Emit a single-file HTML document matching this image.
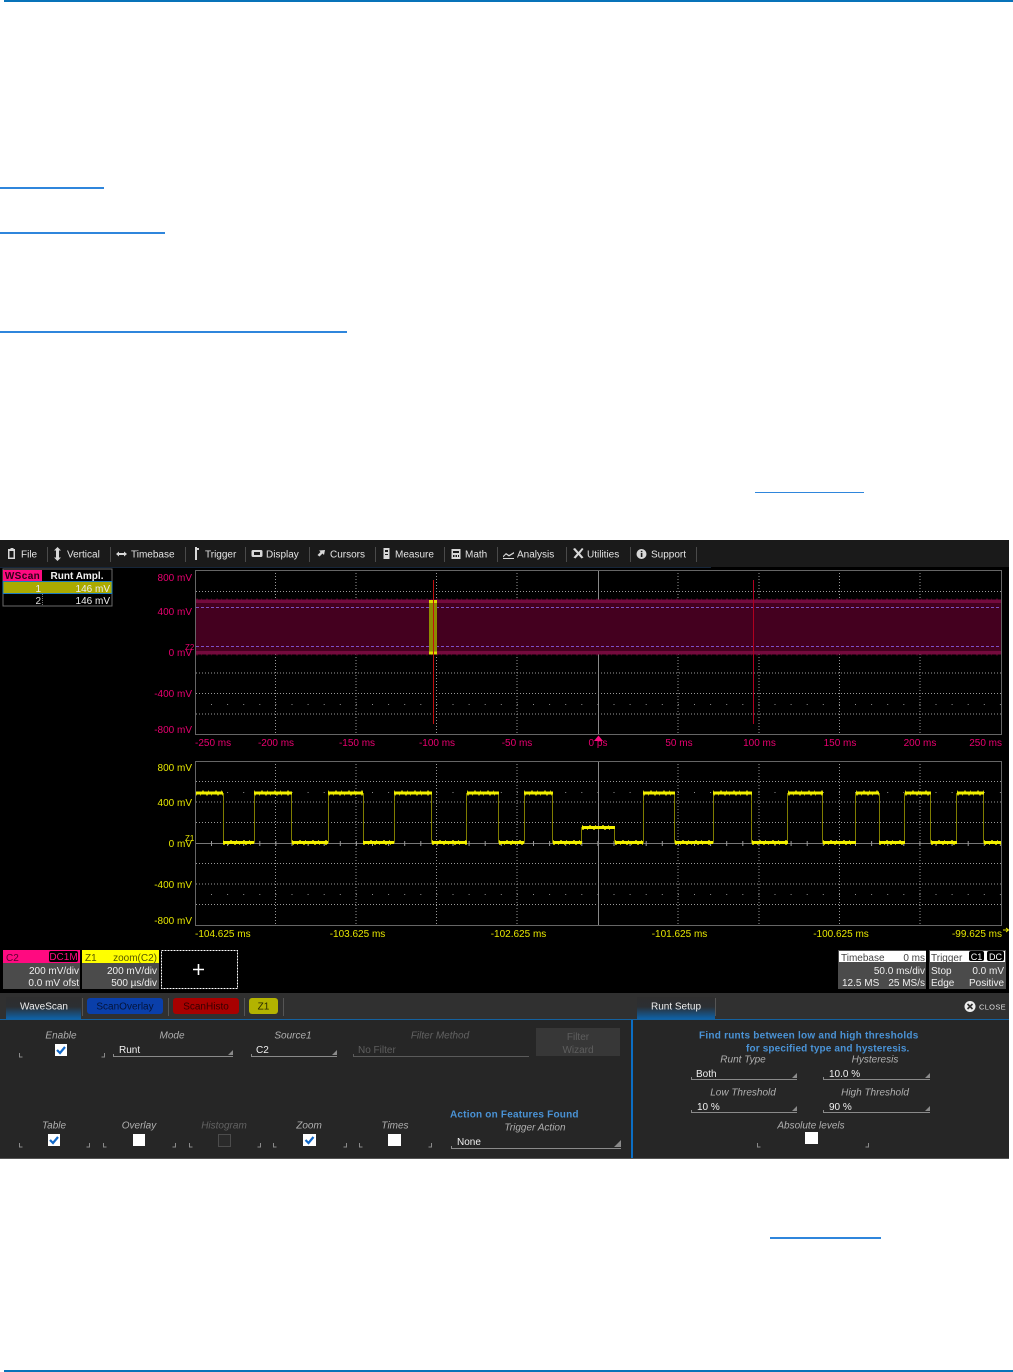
<!DOCTYPE html>
<html lang="en"><head><meta charset="utf-8"><title>WaveScan Runt</title>
<style>
html,body{margin:0;padding:0;background:#fff;width:1013px;height:1372px;overflow:hidden}
svg{display:block}
text{font-family:"Liberation Sans",Arial,sans-serif;font-size:10px}
.scope{filter:blur(.35px)}
.tb{fill:#e4e4e4}
.p{fill:#e8006f}
.y{fill:#e6e600}
.l{fill:#b0b0b0;font-style:italic;text-anchor:middle}
.d{fill:#626262;font-style:italic;text-anchor:middle}
.w{fill:#f0f0f0}
.b{fill:#4a93d6;font-weight:bold}
.r{text-anchor:end}
.m{text-anchor:middle}
.g{stroke:#999;stroke-width:1;stroke-dasharray:1 2;fill:none}
.sep{stroke:#4a4a4a;stroke-width:1}
.k{fill:none;stroke:#8a8a8a;stroke-width:1}
</style></head><body>
<svg width="1013" height="1372" viewBox="0 0 1013 1372" xmlns="http://www.w3.org/2000/svg">
<rect width="1013" height="1372" fill="#fff"/>
<rect x="4" y="0" width="1009" height="2" fill="#0873b9"/>
<rect x="4" y="1370" width="1009" height="2" fill="#0873b9"/>
<rect x="0" y="187" width="104" height="2" fill="#2f86dc"/>
<rect x="0" y="232" width="165" height="2" fill="#2f86dc"/>
<rect x="0" y="331" width="347" height="2" fill="#2f86dc"/>
<rect x="755" y="492" width="109" height="1" fill="#2f86dc"/>
<rect x="770" y="1237" width="111" height="2" fill="#2f86dc"/>

<!-- scope -->
<rect x="0" y="540" width="1009" height="619" fill="#000"/>
<g class="scope">
<rect x="0" y="540" width="1009" height="27" fill="#1a1a1a"/>
<rect x="0" y="567" width="711" height="1" fill="#16263a"/>
<g class="sep"><path d="M47.5 547V562M110.5 547V562M185.5 547V562M245.5 547V562M309.5 547V562M375.5 547V562M444.5 547V562M497.5 547V562M566.5 547V562M630.5 547V562M696.5 547V562"/></g>
<!-- toolbar icons -->
<g fill="#d8d8d8">
<path d="M9 549h1.500v-1h3v1H15v10H8v-10zM9.500 551v6.500h4V551z"/>
<path d="M57.500 547l3.500 3.500h-2v7h2l-3.500 3.500-3.500-3.500h2v-7h-2z"/>
<path d="M116 554l3-2.500v1.500h5v-1.500l3 2.500-3 2.500v-1.500h-5v1.500z"/>
<path d="M195 547h2v1h2v2h-2v10h-2z"/>
<path d="M253 550h8a1.500 1.500 0 0 1 1.500 1.500v4a1.500 1.500 0 0 1-1.500 1.500h-8a1.500 1.500 0 0 1-1.500-1.500v-4a1.500 1.500 0 0 1 1.500-1.500zM254 552v3h6v-3z"/>
<path d="M325 550l-1 5-1.500-1.500-3 3-2-1.500 3-3-1.500-1.500z"/>
<path d="M383.500 548h6v11h-6zM385 550v2h3v-2zM385 554v1h3v-1z"/>
<path d="M451.500 549h9v10h-9zM453 551v2h6v-2zM453 555v2h1.500v-2zM455.500 555v2h1.500v-2zM458 555v2h1v-2z"/>
<path d="M503 558h11v1h-11zM503 556l3-3 3 2 5-3v1.500l-5 3-3-2-3 3z"/>
<path d="M573 549l2-1 3.500 4 3.500-4 1.500 1-3.500 4.500 3.500 4-2 1-3-3.500-3 3.500-2-1 3.500-4z"/>
<circle cx="641.500" cy="554" r="5"/>
</g>
<rect x="640.800" y="553" width="1.600" height="4" fill="#1a1a1a"/><rect x="640.800" y="550.800" width="1.600" height="1.400" fill="#1a1a1a"/>
<g class="tb">
<text x="21" y="557.500">File</text><text x="67" y="557.500">Vertical</text><text x="131" y="557.500">Timebase</text>
<text x="205" y="557.500">Trigger</text><text x="266" y="557.500">Display</text><text x="330" y="557.500">Cursors</text>
<text x="395" y="557.500">Measure</text><text x="465" y="557.500">Math</text><text x="517" y="557.500">Analysis</text>
<text x="587" y="557.500">Utilities</text><text x="651" y="557.500">Support</text>
</g>

<!-- table -->
<rect x="3" y="569" width="109" height="37" fill="none" stroke="#6a6a6a"/>
<rect x="3" y="570" width="39" height="12" fill="#ff0a80"/>
<text x="22.500" y="579" class="m" style="font-weight:bold;fill:#300018;letter-spacing:.4px">WScan</text>
<text x="77" y="579" class="m" style="font-weight:bold;fill:#f2f2f2">Runt Ampl.</text>
<rect x="3" y="581.500" width="109" height="12" fill="#aaaa00" stroke="#1c7ac0"/>
<text x="41" y="592" class="r" fill="#eee">1</text><text x="110" y="592" class="r" fill="#eee">146 mV</text>
<text x="41" y="604" class="r" fill="#ddd">2</text><text x="110" y="604" class="r" fill="#eee">146 mV</text>
<path d="M42.500 594V606" stroke="#777" stroke-dasharray="1 1"/>

<!-- plot 1 -->
<g class="g">
<path d="M275.500 570V734M356 570V734M436.500 570V734M517 570V734M678 570V734M759 570V734M839.500 570V734M920 570V734"/>
<path d="M196 591.500H1001M196 611.500H1001M196 632H1001M196 673H1001M196 693.500H1001M196 714H1001"/>
</g>
<path d="M598.500 570V734" stroke="#888"/>
<path d="M211 704.500H1001" stroke="#8c8c8c" stroke-dasharray="1 15.100"/>
<rect x="196" y="600" width="805" height="54.500" fill="#44001f"/>
<rect x="196" y="599.500" width="805" height="3.500" fill="#740a3d"/>
<rect x="196" y="651" width="805" height="3.500" fill="#740a3d"/>
<path d="M196 599H1001M196 655H1001" stroke="#40001d" stroke-dasharray="2 3 1 4"/>
<path d="M196 607.500H1001M196 646.500H1001" stroke="#7d50c4" stroke-dasharray="3 2"/>
<rect x="429" y="600" width="8" height="54.500" fill="#8e8a00"/>
<rect x="429" y="600" width="8" height="3" fill="#dcd800"/>
<rect x="429" y="651.500" width="8" height="3" fill="#dcd800"/>
<path d="M433.500 580V724" stroke="#c01010"/>
<path d="M753.500 580V724" stroke="#b00020"/>
<rect x="195.500" y="570.500" width="806" height="164" fill="none" stroke="#666"/>
<path d="M594 741l4.500-5.500 4.500 5.500z" fill="#ff0a80"/>
<g class="p">
<text x="192" y="581" class="r">800 mV</text><text x="192" y="615" class="r">400 mV</text>
<text x="192" y="656" class="r">0 mV</text><text x="192" y="697" class="r">-400 mV</text><text x="192" y="733" class="r">-800 mV</text>
<text x="185" y="650" style="font-size:8px">Z2</text>
<text x="195" y="746">-250 ms</text><text x="276" y="746" class="m">-200 ms</text><text x="357" y="746" class="m">-150 ms</text>
<text x="437" y="746" class="m">-100 ms</text><text x="517" y="746" class="m">-50 ms</text><text x="598" y="746" class="m">0 ps</text>
<text x="679" y="746" class="m">50 ms</text><text x="759.500" y="746" class="m">100 ms</text><text x="840" y="746" class="m">150 ms</text>
<text x="920" y="746" class="m">200 ms</text><text x="1002" y="746" class="r">250 ms</text>
</g>

<!-- plot 2 -->
<g class="g">
<path d="M275.500 761V925M356 761V925M436.500 761V925M517 761V925M678 761V925M759 761V925M839.500 761V925M920 761V925"/>
<path d="M196 781.500H1001M196 802H1001M196 822.500H1001M196 863.500H1001M196 884H1001M196 904.500H1001"/>
</g>
<path d="M598.500 761V925" stroke="#888"/>
<path d="M196 843.500H1001" stroke="#777"/>
<path d="M211 843.500H1001" stroke="#999" stroke-width="5" stroke-dasharray="1 15.100"/>
<path d="M211 792.500H1001M211 894.500H1001" stroke="#8c8c8c" stroke-dasharray="1 15.100"/>
<path d="M223.500 793V843M254.500 793V843M291.500 793V843M328.500 793V843M363.500 793V843M394.500 793V843M431.500 793V843M466.500 793V843M498.500 793V843M524.500 793V843M552.500 793V843M581.500 827V843M614.500 827V843M643.500 793V843M674.500 793V843M713.500 793V843M751.500 793V843M787.500 793V843M822.500 793V843M855.500 793V843M879.500 793V843M904.500 793V843M930.500 793V843M956.500 793V843M983.500 793V843" stroke="#7f7c00" fill="none"/>
<path id="wave" d="M195 793H223M223 842.500H254M254 793H292M292 842.500H328M328 793H363M363 842.500H394M394 793H432M432 842.500H467M467 793H499M499 842.500H524M524 793H553M553 842.500H582M582 827.500H615M615 842.500H643M643 793H675M675 842.500H713M713 793H752M752 842.500H788M788 793H823M823 842.500H856M856 793H879M879 842.500H905M905 793H931M931 842.500H957M957 793H984M984 842.500H1001" stroke="#f2f000" stroke-width="3" fill="none"/>
<path transform="translate(0,2)" d="M195 793H223M223 842.500H254M254 793H292M292 842.500H328M328 793H363M363 842.500H394M394 793H432M432 842.500H467M467 793H499M499 842.500H524M524 793H553M553 842.500H582M582 827.500H615M615 842.500H643M643 793H675M675 842.500H713M713 793H752M752 842.500H788M788 793H823M823 842.500H856M856 793H879M879 842.500H905M905 793H931M931 842.500H957M957 793H984M984 842.500H1001" stroke="#a8a600" stroke-width="1" stroke-dasharray="2 3 1 5" fill="none"/>
<path transform="translate(0,-2)" d="M195 793H223M223 842.500H254M254 793H292M292 842.500H328M328 793H363M363 842.500H394M394 793H432M432 842.500H467M467 793H499M499 842.500H524M524 793H553M553 842.500H582M582 827.500H615M615 842.500H643M643 793H675M675 842.500H713M713 793H752M752 842.500H788M788 793H823M823 842.500H856M856 793H879M879 842.500H905M905 793H931M931 842.500H957M957 793H984M984 842.500H1001" stroke="#a8a600" stroke-width="1" stroke-dasharray="1 6 2 4" fill="none"/>
<rect x="195.500" y="761.500" width="806" height="164" fill="none" stroke="#666"/>
<g class="y">
<text x="192" y="771" class="r">800 mV</text><text x="192" y="806" class="r">400 mV</text>
<text x="192" y="847" class="r">0 mV</text><text x="192" y="888" class="r">-400 mV</text><text x="192" y="924" class="r">-800 mV</text>
<text x="185" y="841" style="font-size:8px">Z1</text>
<text x="195" y="937">-104.625 ms</text><text x="357.500" y="937" class="m">-103.625 ms</text><text x="518.500" y="937" class="m">-102.625 ms</text>
<text x="679.500" y="937" class="m">-101.625 ms</text><text x="841" y="937" class="m">-100.625 ms</text><text x="1002" y="937" class="r">-99.625 ms</text>
</g>
<path d="M1003 930h5M1006 928l2.500 2-2.500 2" stroke="#e8e800" fill="none"/>

<!-- descriptors -->
<rect x="3" y="950" width="77" height="39" fill="#4b4b4b"/><rect x="3" y="950" width="77" height="13" fill="#ff0a80"/>
<text x="6" y="961" fill="#5a0030">C2</text><rect x="49" y="951" width="29" height="11" rx="2" fill="#000"/><text x="63.500" y="960" class="m" fill="#ff0a80">DC1M</text>
<text x="79" y="974" class="r" fill="#eee">200 mV/div</text><text x="79" y="986" class="r" fill="#eee">0.0 mV ofst</text>
<rect x="82" y="950" width="77" height="39" fill="#4b4b4b"/><rect x="82" y="950" width="77" height="13" fill="#ffff00"/>
<text x="85" y="961" fill="#555500">Z1</text><text x="157" y="961" class="r" fill="#555500">zoom(C2)</text>
<text x="157" y="974" class="r" fill="#eee">200 mV/div</text><text x="157" y="986" class="r" fill="#eee">500 µs/div</text>
<rect x="161.500" y="950.500" width="76" height="38" fill="none" stroke="#fff" stroke-dasharray="2 1"/>
<path d="M198.500 964V975M193 969.500H204" stroke="#fff" stroke-width="1.600"/>
<rect x="838" y="950" width="88" height="39" fill="#4b4b4b"/><rect x="839" y="951" width="87" height="11" fill="#fff"/>
<text x="841" y="961" fill="#444">Timebase</text><text x="925" y="961" class="r" fill="#444">0 ms</text>
<text x="925" y="974" class="r" fill="#eee">50.0 ms/div</text><text x="842" y="986" fill="#eee">12.5 MS</text><text x="925" y="986" class="r" fill="#eee">25 MS/s</text>
<rect x="929" y="950" width="77" height="39" fill="#4b4b4b"/><rect x="930" y="951" width="75" height="11" fill="#fff"/>
<text x="931" y="961" fill="#444">Trigger</text>
<rect x="969" y="951" width="15" height="10" rx="2" fill="#000"/><text x="976.500" y="960" class="m" fill="#fff" style="font-size:9px">C1</text>
<rect x="987" y="951" width="17" height="10" rx="2" fill="#000"/><text x="995.500" y="960" class="m" fill="#fff" style="font-size:9px">DC</text>
<text x="931" y="974" fill="#eee">Stop</text><text x="1004" y="974" class="r" fill="#eee">0.0 mV</text>
<text x="931" y="986" fill="#eee">Edge</text><text x="1004" y="986" class="r" fill="#eee">Positive</text>

<!-- dialog -->
<rect x="0" y="993" width="1009" height="26" fill="#303030"/>
<rect x="0" y="1019" width="1009" height="1" fill="#14619f"/>
<rect x="0" y="1020" width="1009" height="138" fill="#262626"/>
<rect x="0" y="1158" width="1009" height="1" fill="#555"/>
<rect x="631" y="1020" width="2" height="138" fill="#0b6ec4"/>
<defs><linearGradient id="t" x1="0" y1="0" x2="0" y2="1"><stop offset="0" stop-color="#2e2e2e"/><stop offset=".45" stop-color="#2c2f33"/><stop offset="1" stop-color="#0e62a8"/></linearGradient></defs>
<rect x="6" y="997" width="75" height="22" fill="url(#t)"/><rect x="637" y="997" width="78" height="22" fill="url(#t)"/>
<text x="44" y="1009.500" class="m" fill="#eee">WaveScan</text><text x="676" y="1009.500" class="m" fill="#eee">Runt Setup</text>
<path d="M82.500 998V1016M168.500 998V1016M244.500 998V1016M283.500 998V1016M715.500 998V1016" stroke="#555"/>
<rect x="87" y="998" width="76" height="16" rx="3" fill="#0a3faa"/><text x="125" y="1009.500" class="m" fill="#04143a">ScanOverlay</text>
<rect x="173" y="998" width="66" height="16" rx="3" fill="#a80000"/><text x="206" y="1009.500" class="m" fill="#350000">ScanHisto</text>
<rect x="249" y="998" width="29" height="16" rx="3" fill="#b3b300"/><text x="263.500" y="1009.500" class="m" fill="#2a2a00">Z1</text>
<circle cx="970" cy="1006.500" r="5.500" fill="#eee"/><path d="M967.500 1004l5 5M972.500 1004l-5 5" stroke="#303030" stroke-width="1.600"/>
<text x="979" y="1009.500" fill="#ddd" style="font-size:7.500px;letter-spacing:.3px">CLOSE</text>

<text x="61" y="1038.500" class="l">Enable</text><text x="172" y="1038.500" class="l">Mode</text><text x="293" y="1038.500" class="l">Source1</text><text x="440" y="1038.500" class="d">Filter Method</text>
<text x="54" y="1128.500" class="l">Table</text><text x="139" y="1128.500" class="l">Overlay</text><text x="224" y="1128.500" class="d">Histogram</text><text x="309" y="1128.500" class="l">Zoom</text><text x="395" y="1128.500" class="l">Times</text><text x="535" y="1130.500" class="l">Trigger Action</text>

<g fill="#fff">
<rect x="55" y="1044" width="12" height="12"/><rect x="48" y="1134" width="12" height="12"/><rect x="133" y="1134" width="12" height="12"/><rect x="303" y="1134" width="13" height="12"/><rect x="388" y="1134" width="13" height="12"/><rect x="805" y="1132" width="13" height="12"/>
</g>
<path d="M57 1050l3 3 5-6M50 1140l3 3 5-6M305.500 1140l3 3 5-6" stroke="#1168c8" stroke-width="2.200" fill="none"/>
<rect x="218.500" y="1134.500" width="12" height="12" fill="#2a2a2a" stroke="#4c4c4c"/>

<g class="k">
<path d="M19.500 1053v4h3M104.500 1053v4h-3M19.500 1143v4h3M89.500 1143v4h-3M103.500 1143v4h3M175.500 1143v4h-3M189.500 1143v4h3M260.500 1143v4h-3M273.500 1143v4h3M346.500 1143v4h-3M359.500 1143v4h3M431.500 1143v4h-3M757.500 1143v4h3M868.500 1143v4h-3"/>
<path d="M113.500 1054v2.500H233M251.500 1054v2.500H337M451.500 1146v2.500H621M691.500 1077v2.500H797M823.500 1077v2.500H930M691.500 1110v2.500H797M823.500 1110v2.500H930"/>
</g>
<path d="M353.500 1054v2.500H529" fill="none" stroke="#5a5a5a"/>
<g fill="#8a8a8a"><path d="M233 1050v5h-5zM337 1050v5h-5zM621 1140v7h-7zM797 1073v5h-5zM930 1073v5h-5zM797 1106v5h-5zM930 1106v5h-5z"/></g>
<text x="119" y="1053" class="w">Runt</text><text x="256" y="1053" class="w">C2</text><text x="358" y="1053" fill="#5e5e5e">No Filter</text>
<text x="457" y="1145" class="w">None</text>
<rect x="536" y="1028" width="84" height="28" fill="#373737"/>
<text x="578" y="1040" class="m" fill="#5e5e5e">Filter</text><text x="578" y="1053" class="m" fill="#5e5e5e">Wizard</text>
<text x="450" y="1117.500" class="b" style="letter-spacing:.2px">Action on Features Found</text>
<text x="699" y="1038.500" class="b" style="letter-spacing:.24px">Find runts between low and high thresholds</text>
<text x="746" y="1051.500" class="b" style="letter-spacing:.15px">for specified type and hysteresis.</text>
<text x="743" y="1062.500" class="l">Runt Type</text><text x="875" y="1062.500" class="l">Hysteresis</text>
<text x="696" y="1077" class="w">Both</text><text x="829" y="1077" class="w">10.0 %</text>
<text x="743" y="1095.500" class="l">Low Threshold</text><text x="875" y="1095.500" class="l">High Threshold</text>
<text x="697" y="1110" class="w">10 %</text><text x="829" y="1110" class="w">90 %</text>
<text x="811" y="1128.500" class="l">Absolute levels</text>
</g>
</svg>
</body></html>
